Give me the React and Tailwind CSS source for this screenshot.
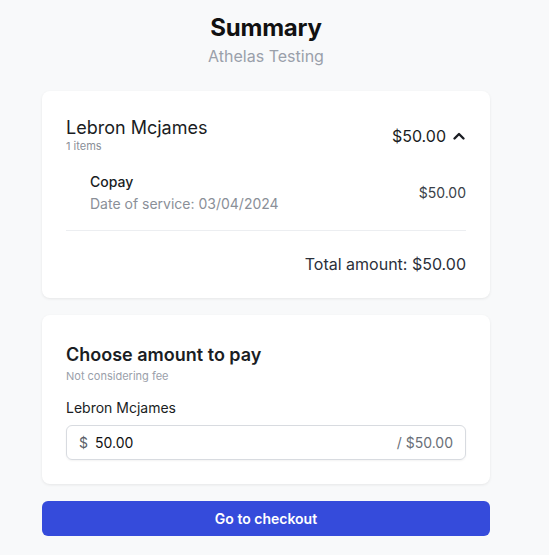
import React from "react";

export default function App() {
  return (
    <div className="min-h-[555px] bg-[#f8f9fa]" style={{ fontFamily: "Inter, 'Noto Sans', sans-serif" }}>
      <div className="w-[532px] flex flex-col items-center pt-[12px] pb-[20px]">
        <h1 className="text-[24px] leading-[32px] font-bold text-[#111] tracking-[-0.2px]">Summary</h1>
        <p className="text-[16px] leading-[24px] text-[#9aa0aa]">Athelas Testing</p>

        <div className="w-[448px] mt-[23px] bg-white rounded-lg shadow-[0_1px_3px_rgba(0,0,0,0.08)] px-[24px] pt-[26px] pb-[22px]">
          <div className="flex items-start justify-between">
            <div>
              <div className="text-[18px] leading-[22px] text-[#1a1d23]">Lebron Mcjames</div>
              <div className="text-[11px] leading-[14px] text-[#8a8f98]">1 items</div>
            </div>
            <div className="flex items-center gap-[6px] mt-[9px]">
              <span className="text-[16px] leading-[20px] text-[#1a1d23]">$50.00</span>
              <svg width="14" height="14" viewBox="0 0 14 14" fill="none" stroke="#1a1d23" strokeWidth="2.4" strokeLinecap="round" strokeLinejoin="round">
                <path d="M2.5 9.5 L7 5 L11.5 9.5" />
              </svg>
            </div>
          </div>
          <div className="flex items-center justify-between pl-[24px] mt-[19px]">
            <div>
              <div className="text-[14px] leading-[20px] text-[#1a1d23] font-medium">Copay</div>
              <div className="text-[14px] leading-[20px] text-[#8a8f98] mt-[2px]">Date of service: 03/04/2024</div>
            </div>
            <div className="text-[14px] leading-[20px] text-[#3a3f48]">$50.00</div>
          </div>
          <div className="border-t border-[#eceef1] mt-[16px]" />
          <div className="text-right text-[16px] leading-[24px] text-[#2b303a] mt-[21px]">Total amount: $50.00</div>
        </div>

        <div className="w-[448px] mt-[17px] bg-white rounded-lg shadow-[0_1px_3px_rgba(0,0,0,0.08)] px-[24px] pt-[28px] pb-[24px]">
          <div className="text-[18px] leading-[24px] font-semibold text-[#1a1d23]">Choose amount to pay</div>
          <div className="text-[11px] leading-[14px] text-[#9aa0aa] mt-[2px]">Not considering fee</div>
          <div className="text-[14px] leading-[20px] text-[#1a1d23] mt-[15px]">Lebron Mcjames</div>
          <div className="mt-[7px] h-[35px] border border-[#d8dbe0] rounded-md flex items-center px-[12px] shadow-[0_1px_2px_rgba(0,0,0,0.05)]">
            <span className="text-[14px] text-[#5a5f68]">$</span>
            <span className="text-[14px] text-[#111] ml-[7px]">50.00</span>
            <span className="ml-auto text-[14px] text-[#6a6f78]">/ $50.00</span>
          </div>
        </div>

        <button className="w-[448px] mt-[17px] h-[35px] rounded-md bg-[#354bdb] text-white text-[14px] font-semibold">Go to checkout</button>
      </div>
    </div>
  );
}
